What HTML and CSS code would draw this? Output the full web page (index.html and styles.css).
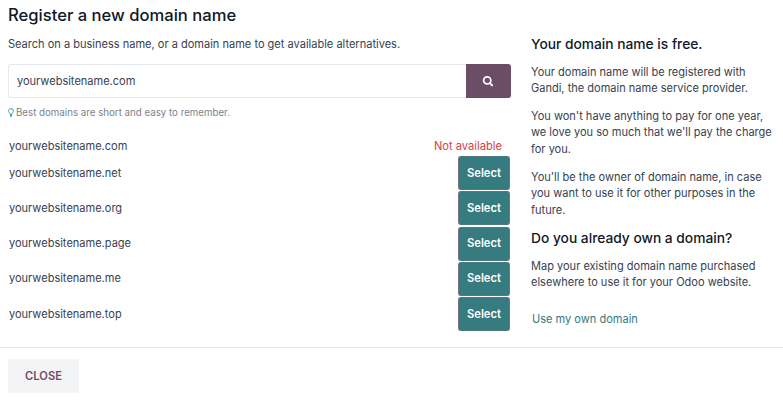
FILE: index.html
```html
<!DOCTYPE html>
<html lang="en">
<head>
<meta charset="utf-8">
<title>Register a new domain name</title>
<link rel="stylesheet" href="styles.css">
</head>
<body>
<main class="content">
  <section class="search">
    <h1 class="title"><span>Register a new domain name</span></h1>
    <p class="intro"><span>Search on a business name, or a domain name to get available alternatives.</span></p>
    <div class="search-bar">
      <div class="search-field"><span>yourwebsitename.com</span></div>
      <button class="search-button" aria-label="Search">
        <svg width="12" height="12" viewBox="0 0 12 12" fill="none" stroke="currentColor"><circle cx="5.2" cy="5.4" r="3.6" stroke-width="1.7"/><path d="M7.9 8.1l2.1 2.1" stroke-width="2" stroke-linecap="round"/></svg>
      </button>
    </div>
    <p class="hint">
      <svg width="6" height="9" viewBox="0 0 6 9" fill="none" stroke="currentColor"><path d="M2 6.2C2 5.1.6 4.5.6 2.8a2.4 2.3 0 0 1 4.8 0C5.4 4.5 4 5.1 4 6.2z" stroke-width=".9"/><path d="M1.9 7.1h2.2M2.1 8.1h1.8" stroke-width="1.1"/><path d="M3.1 1.7c.7 0 1.1.4 1.1 1" stroke-width=".5"/></svg>
      <span>Best domains are short and easy to remember.</span>
    </p>
    <ul class="results">
      <li class="result taken"><span>yourwebsitename.com</span><span class="unavailable">Not available</span></li>
      <li class="result"><span>yourwebsitename.net</span><button class="select">Select</button></li>
      <li class="result"><span>yourwebsitename.org</span><button class="select">Select</button></li>
      <li class="result"><span>yourwebsitename.page</span><button class="select">Select</button></li>
      <li class="result"><span>yourwebsitename.me</span><button class="select">Select</button></li>
      <li class="result"><span>yourwebsitename.top</span><button class="select">Select</button></li>
    </ul>
  </section>
  <aside class="info">
    <h2><span>Your domain name is free.</span></h2>
    <p>Your domain name will be registered with<br>Gandi, the domain name service provider.</p>
    <p>You won't have anything to pay for one year,<br>we love you so much that we'll pay the charge<br>for you.</p>
    <p>You'll be the owner of domain name, in case<br>you want to use it for other purposes in the<br>future.</p>
    <h2 class="second"><span>Do you already own a domain?</span></h2>
    <p>Map your existing domain name purchased<br>elsewhere to use it for your Odoo website.</p>
    <a class="own">Use my own domain</a>
  </aside>
</main>
<footer class="footer"><button class="close">CLOSE</button></footer>
</body>
</html>
```
FILE: styles.css
```css
* { box-sizing: border-box; }
body {
  margin: 0;
  width: 783px;
  height: 400px;
  overflow: hidden;
  background: #fff;
  color: #374151;
  font: 11.04px/16.6px Inter, "Liberation Sans", sans-serif;
}
h1, h2, p, ul { margin: 0; padding: 0; font-weight: 400; }
button { border: 0; padding: 0; font: inherit; }
.content { display: flex; height: 347px; padding-left: 8px; }
.search { width: 503px; }
.title { padding-top: 5px; font-size: 16.6px; line-height: 20px; font-weight: 500; color: #111827; }
.intro { padding-top: 11px; }
.search-bar { display: flex; height: 34px; margin-top: 11.4px; }
.search-field {
  flex: 1;
  display: flex;
  align-items: center;
  padding-left: 8px;
  border: 1px solid #e5e7eb;
  border-right: 0;
  border-radius: 3px 0 0 3px;
}
.search-button {
  display: grid;
  place-items: center;
  width: 45px;
  padding-right: 1px;
  background: #6b4d66;
  color: #fff;
  border-radius: 0 3px 3px 0;
}
.hint { display: flex; align-items: center; gap: 2px; height: 14px; margin-top: 8px; font-size: 9.72px; color: #7d818c; }
.hint svg { color: #35a3b3; }
.results { list-style: none; padding: 17.6px 1px 0; }
.result { display: flex; justify-content: space-between; align-items: center; height: 35.25px; }
.taken { height: 17px; margin-bottom: 0.8px; }
.unavailable { margin-right: 8px; font-size: 11.15px; color: #d23f4a; }
.select {
  width: 52px;
  height: 34px;
  background: #367b80;
  color: #fff;
  font-size: 11.2px;
  font-weight: 600;
  border: 1px solid #7b7385;
  border-top-color: #4a7c82;
  border-bottom-color: #4a7c82;
  border-radius: 3px;
}
.info { margin-left: 20px; padding-top: 34px; white-space: nowrap; }
.info h2 { font-size: 13.77px; line-height: 20px; font-weight: 500; color: #111827; margin-bottom: 9.6px; }
.info p { margin-bottom: 11px; }
.info .second { margin-top: -1.4px; margin-bottom: 9.6px; }
.own { display: block; margin: 20px 0 0 1px; color: #35797d; }
.footer { height: 53px; padding: 11px 8px 0; border-top: 1px solid #e5e7eb; }
.close { width: 71px; height: 34px; background: #f3f4f6; color: #714b67; font-size: 11.2px; font-weight: 600; border-radius: 2px; }
```
